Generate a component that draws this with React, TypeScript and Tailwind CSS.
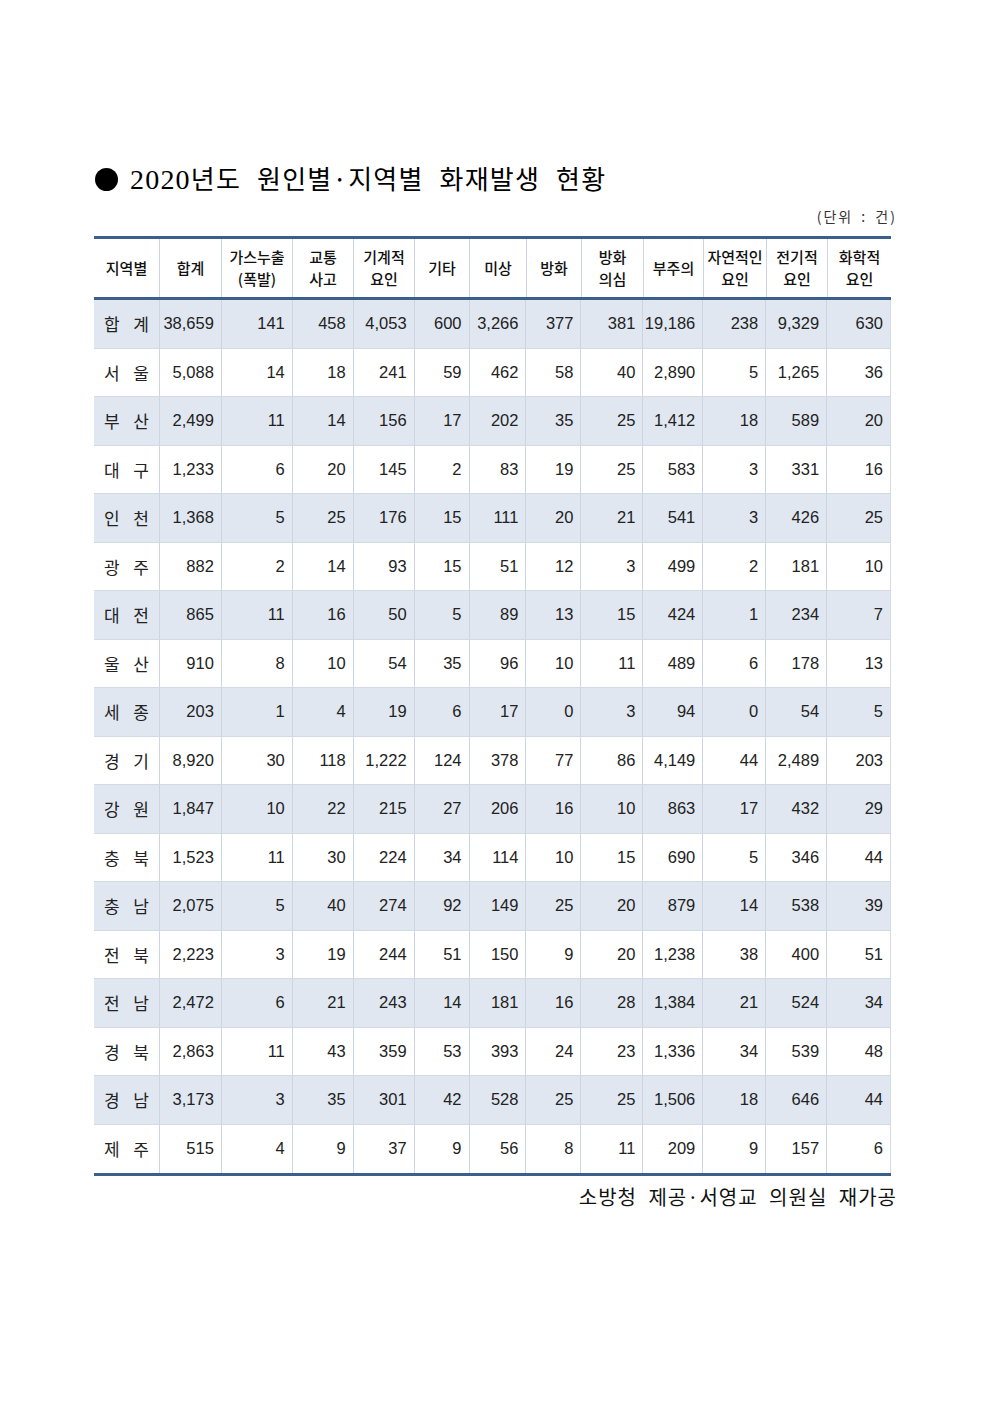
import React from 'react';

// 2020 fire statistics by cause and region (unit: 건)
const columns: string[][] = [
  ['지역별'],
  ['합계'],
  ['가스누출', '(폭발)'],
  ['교통', '사고'],
  ['기계적', '요인'],
  ['기타'],
  ['미상'],
  ['방화'],
  ['방화', '의심'],
  ['부주의'],
  ['자연적인', '요인'],
  ['전기적', '요인'],
  ['화학적', '요인'],
];

const widths = [
  'w-[65px]', 'w-[62px]', 'w-[71px]', 'w-[61px]', 'w-[61px]', 'w-[55px]', 'w-[57px]',
  'w-[55px]', 'w-[62px]', 'w-[60px]', 'w-[63px]', 'w-[61px]', 'w-[64px]',
];

const rows: [string, string, string[]][] = [
  ['합', '계', ['38,659', '141', '458', '4,053', '600', '3,266', '377', '381', '19,186', '238', '9,329', '630']],
  ['서', '울', ['5,088', '14', '18', '241', '59', '462', '58', '40', '2,890', '5', '1,265', '36']],
  ['부', '산', ['2,499', '11', '14', '156', '17', '202', '35', '25', '1,412', '18', '589', '20']],
  ['대', '구', ['1,233', '6', '20', '145', '2', '83', '19', '25', '583', '3', '331', '16']],
  ['인', '천', ['1,368', '5', '25', '176', '15', '111', '20', '21', '541', '3', '426', '25']],
  ['광', '주', ['882', '2', '14', '93', '15', '51', '12', '3', '499', '2', '181', '10']],
  ['대', '전', ['865', '11', '16', '50', '5', '89', '13', '15', '424', '1', '234', '7']],
  ['울', '산', ['910', '8', '10', '54', '35', '96', '10', '11', '489', '6', '178', '13']],
  ['세', '종', ['203', '1', '4', '19', '6', '17', '0', '3', '94', '0', '54', '5']],
  ['경', '기', ['8,920', '30', '118', '1,222', '124', '378', '77', '86', '4,149', '44', '2,489', '203']],
  ['강', '원', ['1,847', '10', '22', '215', '27', '206', '16', '10', '863', '17', '432', '29']],
  ['충', '북', ['1,523', '11', '30', '224', '34', '114', '10', '15', '690', '5', '346', '44']],
  ['충', '남', ['2,075', '5', '40', '274', '92', '149', '25', '20', '879', '14', '538', '39']],
  ['전', '북', ['2,223', '3', '19', '244', '51', '150', '9', '20', '1,238', '38', '400', '51']],
  ['전', '남', ['2,472', '6', '21', '243', '14', '181', '16', '28', '1,384', '21', '524', '34']],
  ['경', '북', ['2,863', '11', '43', '359', '53', '393', '24', '23', '1,336', '34', '539', '48']],
  ['경', '남', ['3,173', '3', '35', '301', '42', '528', '25', '25', '1,506', '18', '646', '44']],
  ['제', '주', ['515', '4', '9', '37', '9', '56', '8', '11', '209', '9', '157', '6']],
];

const korean = "font-['Noto_Sans_CJK_KR',sans-serif]";
const numFont = "font-['Liberation_Sans','Noto_Sans_CJK_KR',sans-serif]";

export default function App() {
  return (
    <div className="w-[992px] min-h-[1403px] bg-white pt-[163px] text-black">
      {/* Title */}
      <div className="flex items-center gap-[12px] pl-[95px] h-[32px]">
        <span className="w-[23px] h-[23px] rounded-full bg-black" />
        <h1 className={`${korean} text-[26px] leading-none font-normal tracking-[1.2px] [word-spacing:9px]`}>
          <span className="font-['Liberation_Serif',serif] text-[28px]">2020</span>년도 원인별·지역별 화재발생 현황
        </h1>
      </div>

      {/* Unit */}
      <div className={`${korean} flex justify-end pr-[95px] mt-[14px] text-[14px] leading-none text-[#333] tracking-[2px] [word-spacing:3px]`}>
        (단위 : 건)
      </div>

      {/* Table */}
      <div className="ml-[94px] mt-[13px] w-[797px] border-t-[3px] border-b-[3px] border-[#3a5f8c]">
        <div className="flex h-[61px] border-b-[3px] border-[#3a5f8c]">
          {columns.map((lines, i) => (
            <div
              key={i}
              className={`${widths[i]} ${i > 0 ? 'border-l border-[#cdd5e0]' : ''} ${korean} flex flex-col items-center justify-center text-[15px] leading-[22px] font-medium text-[#111]`}
            >
              {lines.map((l) => (
                <span key={l}>{l}</span>
              ))}
            </div>
          ))}
        </div>

        {rows.map(([a, b, values], r) => (
          <div
            key={a + b}
            className={`flex h-[48.5px] ${r % 2 === 0 ? 'bg-[#e0e7f1]' : 'bg-white'} ${r < rows.length - 1 ? 'border-b border-[#d3dae4]' : ''} border-r border-[#d3dae4]`}
          >
            <div className={`${widths[0]} ${korean} flex items-center justify-between px-[10px] text-[17px] text-[#222]`}>
              <span>{a}</span>
              <span>{b}</span>
            </div>
            {values.map((v, i) => (
              <div
                key={i}
                className={`${widths[i + 1]} border-l border-[#cdd5e0] ${numFont} flex items-center justify-end pr-[7px] text-[16.5px] text-[#222]`}
              >
                {v}
              </div>
            ))}
          </div>
        ))}
      </div>

      {/* Source */}
      <div className={`${korean} flex justify-end pr-[95px] mt-[11px] text-[20px] leading-none text-[#111] tracking-[1px] [word-spacing:6px]`}>
        소방청 제공·서영교 의원실 재가공
      </div>
    </div>
  );
}
